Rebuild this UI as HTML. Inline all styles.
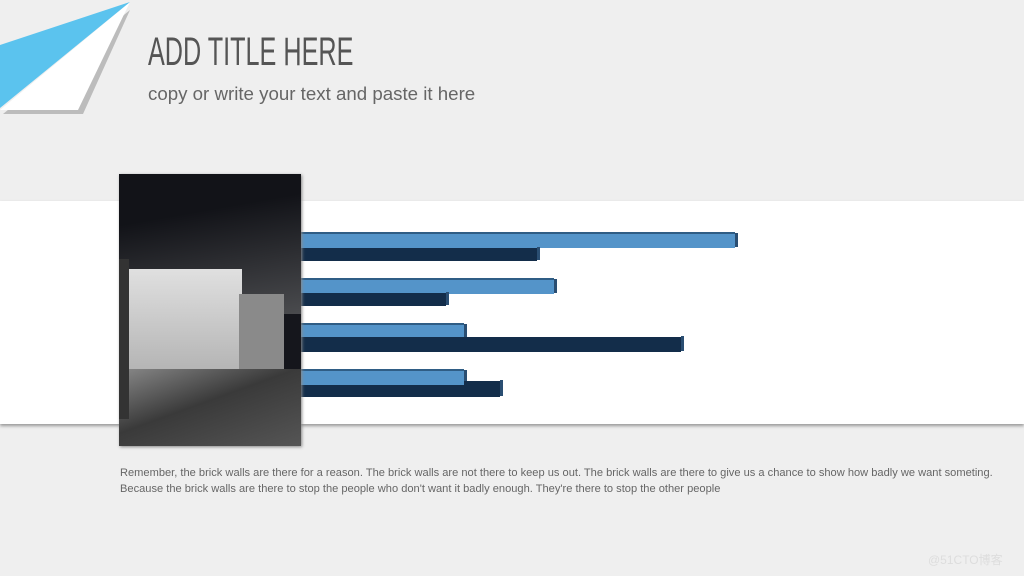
<!DOCTYPE html>
<html><head><meta charset="utf-8"><style>
body{margin:0;width:1024px;height:576px;background:#efefef;position:relative;overflow:hidden;font-family:"Liberation Sans",sans-serif}
.a{position:absolute}
.band{left:0;top:201px;width:1024px;height:223px;background:#fff;box-shadow:0 2px 3px #999}
.lb{background:#5494c9;border-top:2px solid #2f5d85;box-sizing:border-box;height:16px}
.db{background:#132d4a;height:13px}
.lb:after,.db:after{content:"";position:absolute;right:-3px;top:-1px;width:3px;height:100%;background:#2a4e72}
</style></head><body>
<svg class="a" style="left:0;top:0" width="140" height="118">
<polygon points="3,114 83,114 130,10" fill="#999" opacity=".6"/>
<polygon points="0,110 78,110 130,2" fill="#fff"/>
<polygon points="0,45 130,2 0,108" fill="#5bc3ee"/>
</svg>
<div class="a" style="left:148px;top:30px;font-family:'Liberation Sans Narrow','Liberation Sans',sans-serif;font-size:40px;color:#555;transform:scaleX(.63);transform-origin:left;white-space:nowrap">ADD TITLE HERE</div>
<div class="a" style="left:148px;top:83px;font-size:18.7px;color:#666">copy or write your text and paste it here</div>
<div class="a band"></div>
<div class="a lb" style="left:300px;top:232px;width:435px"></div>
<div class="a db" style="left:300px;top:248px;width:237px"></div>
<div class="a lb" style="left:300px;top:278px;width:254px"></div>
<div class="a db" style="left:300px;top:293px;width:146px"></div>
<div class="a lb" style="left:300px;top:323px;width:164px"></div>
<div class="a db" style="left:300px;top:337px;width:381px;height:15px"></div>
<div class="a lb" style="left:300px;top:369px;width:164px"></div>
<div class="a db" style="left:464px;top:381px;width:36px;height:16px"></div>
<div class="a db" style="left:300px;top:385px;width:200px;height:12px"></div>
<div class="a" style="left:119px;top:174px;width:182px;height:272px;box-shadow:1px 1px 3px #888;overflow:hidden;background:#15161c">
<div class="a" style="left:0;top:0;width:182px;height:140px;background:linear-gradient(170deg,#121318 30%,#4a4b4e 100%)"></div>
<div class="a" style="left:8px;top:95px;width:115px;height:100px;background:linear-gradient(180deg,#e0e0e0,#b5b5b5)"></div>
<div class="a" style="left:120px;top:120px;width:45px;height:120px;background:#8a8a8a"></div>
<div class="a" style="left:0;top:195px;width:182px;height:77px;background:linear-gradient(160deg,#888 0%,#3a3a3a 45%,#555 100%)"></div>
<div class="a" style="left:0;top:85px;width:10px;height:160px;background:#333"></div>
</div>
<div class="a" style="left:120px;top:465px;font-size:11.1px;line-height:16px;color:#666;width:900px;white-space:nowrap">Remember, the brick walls are there for a reason. The brick walls are not there to keep us out. The brick walls are there to give us a chance to show how badly we want someting.<br>Because the brick walls are there to stop the people who don't want it badly enough. They're there to stop the other people</div>
<div class="a" style="left:928px;top:551px;font-size:12px;color:#ddd;font-family:'Liberation Sans','Noto Sans CJK SC',sans-serif">@51CTO博客</div>
</body></html>
